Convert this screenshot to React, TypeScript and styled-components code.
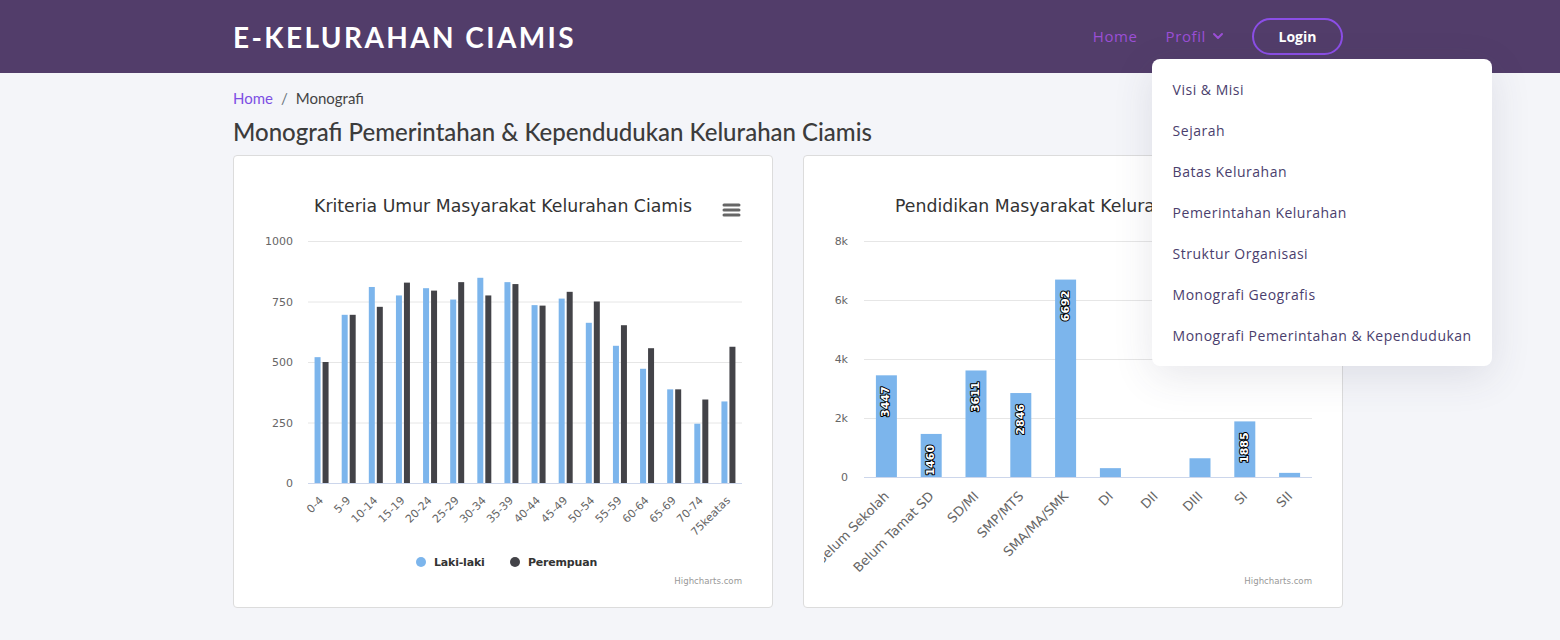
import React from "react";
import styled, { createGlobalStyle } from "styled-components";
import { ChevronDown } from "lucide-react";

const GlobalStyle = createGlobalStyle`
  html, body {
    margin: 0;
    padding: 0;
    background: #f4f5f9;
    overflow: hidden;
  }
  body {
    font-family: "Open Sans", "Liberation Sans", sans-serif;
  }
  * {
    box-sizing: border-box;
  }
`;

const Navbar = styled.header`
  height: 73px;
  background: #523d6a;
`;

const Container = styled.div`
  width: 1110px;
  margin-left: 233px;
`;

const NavInner = styled(Container)`
  height: 100%;
  display: flex;
  align-items: center;
  justify-content: space-between;
`;

const Brand = styled.a`
  font-family: Lato, "Open Sans", sans-serif;
  font-weight: 700;
  font-size: 28px;
  letter-spacing: 2.4px;
  line-height: 1;
  color: #fff;
  text-decoration: none;
`;

const NavList = styled.nav`
  display: flex;
  align-items: center;
  gap: 28px;
`;

const NavLink = styled.a`
  display: flex;
  align-items: center;
  gap: 4px;
  margin-top: -2px;
  font-size: 15px;
  line-height: 22px;
  letter-spacing: 0.6px;
  color: #9b4fd6;
  text-decoration: none;
`;

const NavDrop = styled.div`
  position: relative;
`;

const Dropdown = styled.ul`
  position: absolute;
  top: calc(100% + 12px);
  left: -14px;
  z-index: 10;
  width: 340px;
  margin: 0;
  padding: 10px 0;
  list-style: none;
  background: #fff;
  border-radius: 8px;
  box-shadow: 0 10px 40px rgba(60, 60, 90, 0.12);
`;

const DropItem = styled.li`
  padding: 0 21px;
  height: 41px;
  line-height: 41px;
  font-size: 14px;
  letter-spacing: 0.5px;
  white-space: nowrap;
  color: #4a3e6d;
`;

const LoginButton = styled.button`
  width: 91px;
  height: 37px;
  margin-left: -2px;
  border: 2px solid #8b4ee6;
  border-radius: 20px;
  background: transparent;
  color: #fff;
  font-family: "Open Sans", sans-serif;
  font-weight: 700;
  font-size: 14px;
`;

const Breadcrumb = styled.div`
  padding-top: 15px;
  font-family: Lato, "Open Sans", sans-serif;
  font-size: 15px;
  line-height: 20px;
  color: #444;
`;

const Crumb = styled.a`
  color: #7d4fe4;
  text-decoration: none;
`;

const Sep = styled.span`
  padding: 0 8px;
  color: #6c757d;
`;

const PageTitle = styled.h1`
  margin: 9px 0 8px;
  font-family: Lato, "Open Sans", sans-serif;
  font-weight: 500;
  font-size: 24px;
  line-height: 30px;
  color: #3c3c3c;
`;

const CardGrid = styled.div`
  display: grid;
  grid-template-columns: 1fr 1fr;
  gap: 30px;
`;

const Card = styled.div`
  background: #fff;
  border: 1px solid #dcdcdc;
  border-radius: 4px;
  padding: 32px 20px 19px;
`;

const ChartSvg = styled.svg`
  display: block;
  overflow: hidden;
`;

const ChartTitle = styled.text`
  font-family: "DejaVu Sans", Verdana, sans-serif;
  font-size: 17.3px;
  fill: #333;
`;

const AxisLabel = styled.text<{ $size?: number }>`
  font-family: "DejaVu Sans", Verdana, sans-serif;
  font-size: ${(p) => p.$size ?? 11}px;
  fill: #666;
`;

const LegendText = styled.text`
  font-family: "DejaVu Sans", Verdana, sans-serif;
  font-size: 11px;
  font-weight: 700;
  letter-spacing: -0.2px;
  fill: #333;
`;

const Credits = styled.text`
  font-family: "DejaVu Sans", Verdana, sans-serif;
  font-size: 8.6px;
  fill: #999;
`;

const DataLabel = styled.text`
  font-family: "DejaVu Sans", Verdana, sans-serif;
  font-size: 11px;
  font-weight: 700;
  fill: #fff;
  stroke: #000;
  stroke-width: 2px;
  stroke-linejoin: round;
  paint-order: stroke;
`;

const W = 498;
const BLUE = "#7cb5ec";
const DARK = "#434348";

function MenuIcon({ x, y }: { x: number; y: number }) {
  return (
    <g stroke="#666" strokeWidth={3} strokeLinecap="round">
      <line x1={x + 1} x2={x + 16} y1={y} y2={y} />
      <line x1={x + 1} x2={x + 16} y1={y + 5} y2={y + 5} />
      <line x1={x + 1} x2={x + 16} y1={y + 10} y2={y + 10} />
    </g>
  );
}

const ageRows: [string, number, number][] = [
  ["0-4", 520, 500],
  ["5-9", 695, 695],
  ["10-14", 810, 728],
  ["15-19", 775, 828],
  ["20-24", 805, 795],
  ["25-29", 758, 830],
  ["30-34", 848, 775],
  ["35-39", 830, 822],
  ["40-44", 735, 733],
  ["45-49", 762, 790],
  ["50-54", 662, 750],
  ["55-59", 567, 652],
  ["60-64", 472, 557],
  ["65-69", 387, 387],
  ["70-74", 245, 345],
  ["75keatas", 337, 563],
];

function AgeChart() {
  const left = 54;
  const right = 488;
  const top = 53;
  const bottom = 295;
  const step = (right - left) / ageRows.length;
  const y = (v: number) => bottom - (v / 1000) * (bottom - top);

  return (
    <ChartSvg width={W} height={400}>
      <ChartTitle x={W / 2} y={24} textAnchor="middle">
        Kriteria Umur Masyarakat Kelurahan Ciamis
      </ChartTitle>
      <MenuIcon x={469} y={17} />
      {[0, 250, 500, 750, 1000].map((t) => (
        <g key={t}>
          {t > 0 && <line x1={left} x2={right} y1={y(t) + 0.5} y2={y(t) + 0.5} stroke="#e6e6e6" />}
          <AxisLabel x={39} y={y(t) + 4} textAnchor="end">
            {t}
          </AxisLabel>
        </g>
      ))}
      {ageRows.map(([label, a, b], i) => {
        const cx = left + step * (i + 0.5);
        const lx = cx + 2.5;
        const ly = 313;
        return (
          <g key={label}>
            <rect x={cx - 7} y={y(a)} width={6} height={bottom - y(a)} fill={BLUE} />
            <rect x={cx + 1} y={y(b)} width={6} height={bottom - y(b)} fill={DARK} />
            <AxisLabel x={lx} y={ly} textAnchor="end" transform={`rotate(-45 ${lx} ${ly})`}>
              {label}
            </AxisLabel>
          </g>
        );
      })}
      <line x1={left} x2={right} y1={bottom + 0.5} y2={bottom + 0.5} stroke="#ccd6eb" />
      <circle cx={167} cy={374} r={5} fill={BLUE} />
      <LegendText x={180} y={378}>Laki-laki</LegendText>
      <circle cx={261} cy={374} r={5} fill={DARK} />
      <LegendText x={274} y={378}>Perempuan</LegendText>
      <Credits x={488} y={396} textAnchor="end">
        Highcharts.com
      </Credits>
    </ChartSvg>
  );
}

const eduRows: [string, number][] = [
  ["Belum Sekolah", 3447],
  ["Belum Tamat SD", 1460],
  ["SD/MI", 3611],
  ["SMP/MTS", 2846],
  ["SMA/MA/SMK", 6692],
  ["DI", 300],
  ["DII", 0],
  ["DIII", 635],
  ["SI", 1885],
  ["SII", 140],
];

function EduChart() {
  const left = 40;
  const right = 488;
  const top = 53;
  const bottom = 289;
  const step = (right - left) / eduRows.length;
  const y = (v: number) => bottom - (v / 8000) * (bottom - top);

  return (
    <ChartSvg width={W} height={400}>
      <ChartTitle x={W / 2} y={24} textAnchor="middle">
        Pendidikan Masyarakat Kelurahan Ciamis
      </ChartTitle>
      <MenuIcon x={469} y={17} />
      {[0, 2000, 4000, 6000, 8000].map((t) => (
        <g key={t}>
          {t > 0 && <line x1={left} x2={right} y1={y(t) + 0.5} y2={y(t) + 0.5} stroke="#e6e6e6" />}
          <AxisLabel x={24} y={y(t) + 4} textAnchor="end">
            {t === 0 ? "0" : `${t / 1000}k`}
          </AxisLabel>
        </g>
      ))}
      {eduRows.map(([label, v], i) => {
        const cx = left + step * (i + 0.5);
        const lx = cx + 3.5;
        const ly = 309;
        const barTop = y(v);
        const dx = cx + 3;
        const dy = Math.min(barTop + 11, bottom - 32);
        return (
          <g key={label}>
            {v > 0 && <rect x={cx - 10.5} y={barTop} width={21} height={bottom - barTop} fill={BLUE} />}
            <AxisLabel
              $size={13}
              x={lx}
              y={ly}
              textAnchor="end"
              transform={`rotate(-45 ${lx} ${ly})`}
            >
              {label}
            </AxisLabel>
            {v > 1000 && (
              <DataLabel x={dx} y={dy} textAnchor="end" transform={`rotate(-90 ${dx} ${dy})`}>
                {v}
              </DataLabel>
            )}
          </g>
        );
      })}
      <line x1={left} x2={right} y1={bottom + 0.5} y2={bottom + 0.5} stroke="#ccd6eb" />
      <Credits x={488} y={396} textAnchor="end">
        Highcharts.com
      </Credits>
    </ChartSvg>
  );
}

const profilMenu = [
  "Visi & Misi",
  "Sejarah",
  "Batas Kelurahan",
  "Pemerintahan Kelurahan",
  "Struktur Organisasi",
  "Monografi Geografis",
  "Monografi Pemerintahan & Kependudukan",
];

export default function App() {
  return (
    <>
      <GlobalStyle />
      <Navbar>
        <NavInner>
          <Brand href="#">E-KELURAHAN CIAMIS</Brand>
          <NavList>
            <NavLink href="#">Home</NavLink>
            <NavDrop>
              <NavLink href="#">
                Profil <ChevronDown size={16} strokeWidth={3} />
              </NavLink>
              <Dropdown>
                {profilMenu.map((m) => (
                  <DropItem key={m}>{m}</DropItem>
                ))}
              </Dropdown>
            </NavDrop>
            <LoginButton>Login</LoginButton>
          </NavList>
        </NavInner>
      </Navbar>
      <Container>
        <Breadcrumb>
          <Crumb href="#">Home</Crumb>
          <Sep>/</Sep>
          Monografi
        </Breadcrumb>
        <PageTitle>Monografi Pemerintahan &amp; Kependudukan Kelurahan Ciamis</PageTitle>
        <CardGrid>
          <Card>
            <AgeChart />
          </Card>
          <Card>
            <EduChart />
          </Card>
        </CardGrid>
      </Container>
    </>
  );
}
